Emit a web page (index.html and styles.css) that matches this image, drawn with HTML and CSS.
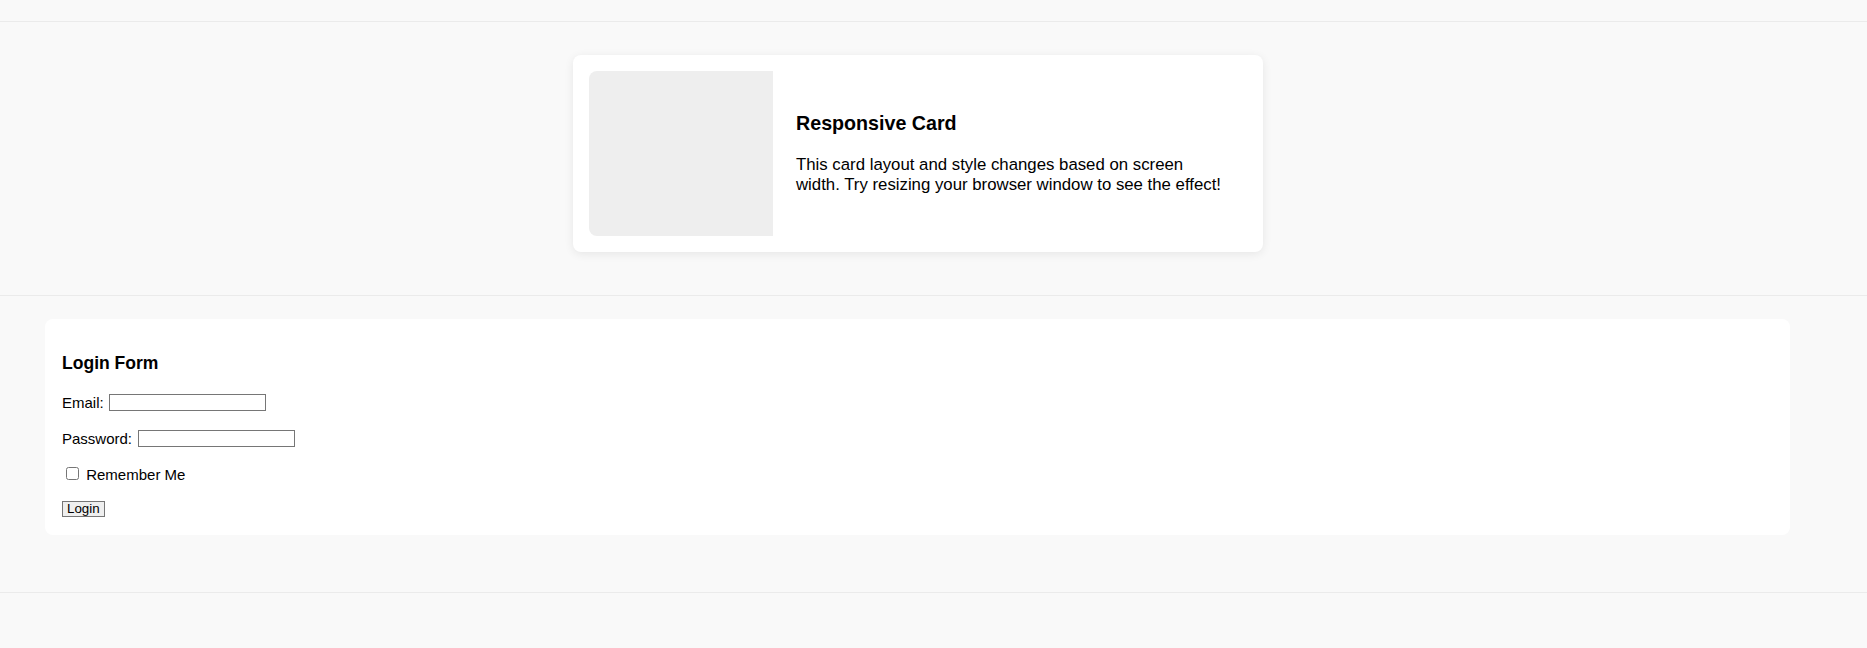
FILE: index.html
```html
<!DOCTYPE html>
<html lang="en">
<head>
<meta charset="utf-8">
<title>Responsive Card</title>
<link rel="stylesheet" href="styles.css">
</head>
<body>
<header class="topbar"></header>
<section class="card-section">
  <div class="card">
    <div class="card-image"></div>
    <div class="card-content">
      <h3 class="card-title">Responsive Card</h3>
      <p class="card-text">This card layout and style changes based on screen width. Try resizing your browser window to see the effect!</p>
    </div>
  </div>
</section>
<section class="form-section">
  <form class="login-form">
    <h3 class="form-title">Login Form</h3>
    <div class="form-row"><label class="row-label" for="email">Email:</label><input class="text-input" id="email" type="text"></div>
    <div class="form-row"><label class="row-label" for="password">Password:</label><input class="text-input" id="password" type="password"></div>
    <div class="form-row"><input class="check" id="remember" type="checkbox"><label class="check-label" for="remember">Remember Me</label></div>
    <div class="form-row"><button class="login-btn" type="button">Login</button></div>
  </form>
</section>
<footer class="footer"></footer>
</body>
</html>
```

FILE: styles.css
```css
html, body {
  margin: 0;
  padding: 0;
}
body {
  background: #f9f9f9;
  font-family: "Liberation Sans", Arial, sans-serif;
  color: #000;
  font-size: 16px;
}
.topbar {
  height: 21px;
  border-bottom: 1px solid #ebebeb;
}
.card-section {
  display: flex;
  justify-content: center;
  padding: 33px 31px 43px 0;
  border-bottom: 1px solid #ebebeb;
}
.card {
  width: 690px;
  box-sizing: border-box;
  padding: 16px;
  display: flex;
  background: #fff;
  border-radius: 8px;
  box-shadow: 0 2px 10px rgba(0, 0, 0, 0.08);
  font-size: 16.8px;
}
.card-image {
  flex: 0 0 184px;
  height: 165px;
  background: #eeeeee;
  border-radius: 8px 0 0 8px;
}
.card-content {
  flex: 1;
  padding: 0 19px 0 23px;
  display: flex;
  flex-direction: column;
  justify-content: center;
}
.card-title {
  margin: 0 0 19.66px;
  font-size: 19.66px;
  font-weight: bold;
}
.card-text {
  margin: 0;
}
.form-section {
  padding: 23px 77px 57px 45px;
  border-bottom: 1px solid #ebebeb;
}
.login-form {
  background: #fff;
  border-radius: 8px;
  padding: 16px 16px 16px 17px;
  display: flex;
  flex-direction: column;
  gap: 16px;
  font-size: 15px;
}
.form-title {
  margin: 17.55px 0 1.55px;
  font-size: 17.55px;
  font-weight: bold;
}
.form-row {
  height: 20px;
  display: flex;
  align-items: flex-end;
}
.row-label {
  margin-right: 5.5px;
  line-height: 17.2px;
}
.text-input {
  box-sizing: border-box;
  width: 157px;
  height: 17px;
  margin: 0;
  padding: 0 2px;
  border: 1px solid #767676;
  background: #fff;
  font-size: 13.33px;
}
.check {
  margin: 3px 3px 3px 4px;
  width: 13px;
  height: 13px;
  align-self: center;
}
.check-label {
  margin-left: 4.2px;
  line-height: 17.2px;
}
.login-btn {
  align-self: center;
  box-sizing: border-box;
  height: 16px;
  padding: 0 4px;
  margin: 0;
  border: 1px solid #767676;
  border-radius: 0;
  background: #efefef;
  font-family: "Liberation Sans", Arial, sans-serif;
  font-size: 13.33px;
  line-height: 14px;
  color: #000;
}
.footer {
  height: 56px;
}
```
